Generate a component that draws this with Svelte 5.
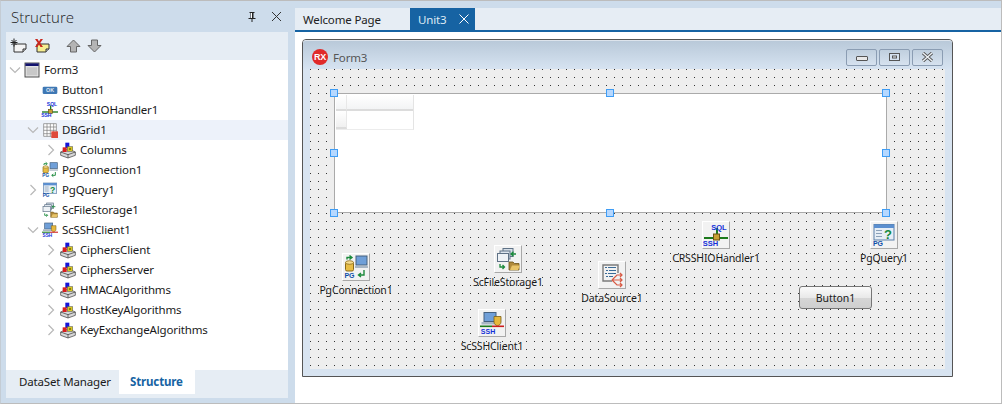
<script>
  const tree = [
    { name: 'Form3', icon: 'form', level: 0, arrow: 'down' },
    { name: 'Button1', icon: 'button', level: 1 },
    { name: 'CRSSHIOHandler1', icon: 'handler', level: 1 },
    { name: 'DBGrid1', icon: 'grid', level: 1, arrow: 'down', active: true },
    { name: 'Columns', icon: 'cube', level: 2, arrow: 'right' },
    { name: 'PgConnection1', icon: 'conn', level: 1 },
    { name: 'PgQuery1', icon: 'query', level: 1, arrow: 'right' },
    { name: 'ScFileStorage1', icon: 'files', level: 1 },
    { name: 'ScSSHClient1', icon: 'ssh', level: 1, arrow: 'down' },
    { name: 'CiphersClient', icon: 'cube', level: 2, arrow: 'right' },
    { name: 'CiphersServer', icon: 'cube', level: 2, arrow: 'right' },
    { name: 'HMACAlgorithms', icon: 'cube', level: 2, arrow: 'right' },
    { name: 'HostKeyAlgorithms', icon: 'cube', level: 2, arrow: 'right' },
    { name: 'KeyExchangeAlgorithms', icon: 'cube', level: 2, arrow: 'right' }
  ];

  // placed by hand on the form canvas, coordinates relative to the client area
  const components = [
    { name: 'PgConnection1', icon: 'conn', x: 32, y: 184 },
    { name: 'ScFileStorage1', icon: 'files', x: 184, y: 176 },
    { name: 'ScSSHClient1', icon: 'ssh', x: 168, y: 240 },
    { name: 'DataSource1', icon: 'source', x: 288, y: 192 },
    { name: 'CRSSHIOHandler1', icon: 'handler', x: 392, y: 152 },
    { name: 'PgQuery1', icon: 'query', x: 560, y: 152 }
  ];

  const handles = [
    [0, 0], [276, 0], [552, 0],
    [0, 60], [552, 60],
    [0, 120], [276, 120], [552, 120]
  ];
</script>

{#snippet icon(kind, size)}
  <svg class="icon" width={size} height={size} viewBox="0 0 24 24">
    {#if kind === 'form'}
      <rect x="1.5" y="1.5" width="21" height="21" fill="#e4e4e4" stroke="#444" stroke-width="1.4" />
      <rect x="2" y="2" width="20" height="4" fill="#14146e" />
      <rect x="4" y="8" width="16" height="12" fill="#c8c8c8" />
    {:else if kind === 'button'}
      <rect x="1" y="7" width="22" height="11" rx="2" fill="#3f78b4" />
      <text x="12" y="15.5" class="tiny" fill="#dfe9f5" font-size="8">OK</text>
    {:else if kind === 'handler'}
      <rect x="0" y="14" width="24" height="2" fill="#1c7a1c" />
      <rect x="12" y="5" width="2" height="10" fill="#1c7a1c" />
      <rect x="9.5" y="11" width="6" height="6" fill="#c8a035" stroke="#6b5316" stroke-width="1" />
      <text x="15" y="6.5" class="tiny" fill="#1430d8" font-size="7.5">SQL</text>
      <text x="6.5" y="22.5" class="tiny" fill="#1430d8" font-size="7.5">SSH</text>
    {:else if kind === 'grid'}
      <path d="M2.5 2.5h19v19h-19zM2.5 7.5h19M2.5 12.5h19M2.5 17.5h19M7.5 2.5v19M12.5 2.5v19M17.5 2.5v19" fill="#fff" stroke="#777" stroke-width="1" />
      <rect x="14" y="14" width="10" height="10" fill="#df4a3c" />
    {:else if kind === 'cube'}
      <path d="M1 15l11-5 11 5v5l-11 4-11-4z" fill="#d8d8d8" stroke="#333" stroke-width="1" />
      <path d="M1 15l11 4 11-4M12 19v5" fill="none" stroke="#333" stroke-width="1" />
      <rect x="8" y="1" width="6" height="8" fill="#1414d8" />
      <rect x="4" y="8" width="6" height="7" fill="#d82020" />
      <rect x="11" y="7" width="8" height="7" fill="#d8c820" stroke="#555" stroke-width=".8" />
      <circle cx="15" cy="10.5" r="1.6" fill="#7a6a10" />
    {:else if kind === 'conn'}
      <rect x="1.5" y="7" width="8" height="9" rx="1.5" fill="#e8bd45" stroke="#8a6a18" stroke-width="1" />
      <ellipse cx="5.5" cy="7.5" rx="4" ry="1.8" fill="#f6dd90" stroke="#8a6a18" stroke-width=".8" />
      <rect x="12" y="1" width="11" height="9" fill="#6f9fd8" stroke="#44607f" stroke-width="1" />
      <path d="M11 11h13v2H11z" fill="#a8b6c4" />
      <path d="M3 4.500V2.500h4M5.500 .500L8 2.500 5.500 4.500" fill="none" stroke="#1c8a3c" stroke-width="1.400" />
      <path d="M20 15v5h-5M17 18l-2.500 2 2.500 2" fill="none" stroke="#1c8a3c" stroke-width="1.400" />
      <text x="5.500" y="22.500" class="tiny" fill="#0f4fa8" font-size="7">PG</text>
    {:else if kind === 'query'}
      <rect x="2" y="1.500" width="20" height="15.500" fill="#e6eef6" stroke="#5a7fa8" stroke-width="1" />
      <rect x="2" y="1.500" width="20" height="3.500" fill="#5b8fd0" />
      <path d="M4 7.500h6M4 10.500h6M4 13.500h6" stroke="#8aa0b8" stroke-width="1.200" />
      <text x="16" y="16" class="tiny" fill="#138a3c" font-size="13">?</text>
      <text x="6" y="22.500" class="tiny" fill="#0f4fa8" font-size="7">PG</text>
    {:else if kind === 'files'}
      <rect x="7" y="1.500" width="10" height="8" fill="#d6dfe8" stroke="#5f7286" stroke-width="1" />
      <rect x="4" y="4" width="10" height="8" fill="#dde5ee" stroke="#5f7286" stroke-width="1" />
      <rect x="1.500" y="6.500" width="11" height="8" fill="#eef2f6" stroke="#5f7286" stroke-width="1" />
      <path d="M15 7h5M17.500 4.800L15 7l2.500 2.200M4 17v3h4M6.500 18l2 2-2 2" fill="none" stroke="#1c8a3c" stroke-width="1.300" />
      <path d="M13 15h4l1.500 1.500H23V23H13z" fill="#b08a3c" stroke="#6b5316" stroke-width=".8" />
      <path d="M14 23l2-4.500h8L22 23z" fill="#e8c468" />
    {:else if kind === 'ssh'}
      <rect x="4" y="1.500" width="12" height="9" fill="#6f9fd8" stroke="#44607f" stroke-width="1" />
      <path d="M1.500 11h16v2.500h-16z" fill="#a8b6c4" />
      <path d="M14 5.500h7v5.500c0 2.500-2 3-3.500 4-1.500-1-3.500-1.500-3.500-4z" fill="#e6b83c" stroke="#7a5e16" stroke-width=".8" />
      <rect x="0" y="14.500" width="12" height="1.600" fill="#1c7a1c" />
      <rect x="12" y="14.500" width="12" height="1.600" fill="#cc1c1c" />
      <text x="8" y="22.500" class="tiny" fill="#1430d8" font-size="7">SSH</text>
    {:else if kind === 'source'}
      <path d="M18 10V2H3v16h9" fill="none" stroke="#7c7c7c" stroke-width="1.400" />
      <path d="M5 4.500h2M8 4.500h8M6 7.500h2M9 7.500h7M5 10.500h2M8 10.500h8M6 13.500h2M9 13.500h4" stroke="#3c6c98" stroke-width="1.200" />
      <path d="M12 17l5-5h5M12 17h10M12 17l5 5h5M20 10l2 2-2 2M20 15l2 2-2 2M20 20l2 2-2 2" fill="none" stroke="#d85a44" stroke-width="1.200" />
    {/if}
  </svg>
{/snippet}

{#snippet chevron(dir)}
  <svg class="chev" width="12" height="12" viewBox="0 0 12 12">
    {#if dir === 'down'}
      <path d="M1 3.500l5 5 5-5" />
    {:else if dir === 'right'}
      <path d="M3.500 1l5 5-5 5" />
    {/if}
  </svg>
{/snippet}

<div class="app">
  <aside class="left">
    <header class="panel-title">
      <span>Structure</span>
      <div class="panel-actions">
        <svg width="10" height="12" viewBox="0 0 10 12"><path d="M2.500 1h5v1h-1v5h2v1h-3v3h-1V8h-3V7h2V2h-1z" fill="#222" /><path d="M4 2h1v5H4z" fill="#fff" /></svg>
        <svg width="11" height="11" viewBox="0 0 11 11"><path d="M1 1l9 9M10 1l-9 9" stroke="#333" stroke-width="1" fill="none" /></svg>
      </div>
    </header>

    <div class="panel-body">
      <div class="toolbar">
        <svg width="17" height="16" viewBox="0 0 17 16">
          <path d="M4 6h12v5l-3 3H4z" fill="#f4f4f4" stroke="#333" />
          <path d="M13 14v-3h3" fill="#ccc" stroke="#333" />
          <path d="M4 .5v8M.5 4.500h7M1.500 2l5 5M6.500 2l-5 5" stroke="#222" />
        </svg>
        <svg width="17" height="16" viewBox="0 0 17 16">
          <path d="M4 6h12v5l-3 3H4z" fill="#f6ee90" stroke="#333" />
          <path d="M13 14v-3h3" fill="#ccc" stroke="#333" />
          <path d="M2 1h2.500L6 3.500 7.500 1H10L7.200 5 10 9H7.500L6 6.500 4.500 9H2l2.800-4z" fill="#c8261c" />
        </svg>
        <svg class="gap" width="15" height="14" viewBox="0 0 15 14"><path d="M7.500 1L14 7.500h-3.500V13h-6V7.500H1z" fill="#b4b4b4" stroke="#666" /></svg>
        <svg width="15" height="14" viewBox="0 0 15 14"><path d="M7.500 13L14 6.500h-3.500V1h-6v5.500H1z" fill="#b4b4b4" stroke="#666" /></svg>
      </div>

      <ul class="tree">
        {#each tree as row}
          <li class="row level-{row.level}" class:active={row.active}>
            <span class="arrow">{@render chevron(row.arrow)}</span>
            {@render icon(row.icon, 16)}
            <span class="label">{row.name}</span>
          </li>
        {/each}
      </ul>

      <div class="bottom-tabs">
        <span class="bottom-tab">DataSet Manager</span>
        <span class="bottom-tab current">Structure</span>
      </div>
    </div>
  </aside>

  <main class="right">
    <nav class="tabs">
      <span class="tab">Welcome Page</span>
      <span class="tab current">
        Unit3
        <svg width="10" height="10" viewBox="0 0 10 10"><path d="M.5.500l9 9M9.500.500l-9 9" stroke="#fff" stroke-width="1" fill="none" /></svg>
      </span>
    </nav>

    <div class="designer">
      <div class="form">
        <div class="form-title">
          <span class="rx">RX</span>
          <span class="form-name">Form3</span>
          <div class="window-buttons">
            <span class="wbtn"><i class="min"></i></span>
            <span class="wbtn"><svg width="11" height="8" viewBox="0 0 11 8"><rect x=".5" y=".5" width="10" height="7" fill="#d6e2ef" stroke="#555" /><rect x="3.500" y="3" width="4" height="2" fill="#eef2f6" stroke="#555" /></svg></span>
            <span class="wbtn"><svg width="13" height="10" viewBox="0 0 13 10"><path d="M2 1l9 8M11 1l-9 8" stroke="#555" stroke-width="3.200" fill="none" /><path d="M2 1l9 8M11 1l-9 8" stroke="#eef2f6" stroke-width="1.400" fill="none" /></svg></span>
          </div>
        </div>

        <div class="client">
          <div class="dbgrid">
            <div class="fake-grid">
              <div class="cell head ind"></div>
              <div class="cell head"></div>
              <div class="cell ind second"></div>
              <div class="cell"></div>
            </div>
            {#each handles as h}
              <span class="handle" style="left: {h[0]}px; top: {h[1]}px"></span>
            {/each}
          </div>

          {#each components as c}
            <div class="comp" style="left: {c.x}px; top: {c.y}px">
              <div class="comp-box">{@render icon(c.icon, 24)}</div>
              <div class="comp-label">{c.name}</div>
            </div>
          {/each}

          <button class="btn1" type="button">Button1</button>
        </div>
      </div>
    </div>
  </main>
</div>

<style>
  :global(body) {
    margin: 0;
  }

  .app {
    width: 1002px;
    height: 404px;
    box-sizing: border-box;
    display: grid;
    grid-template-columns: 294px 1fr;
    border: 1px solid #bcbcbc;
    border-left-color: #c4ccd4;
    background: #cddceb;
    font-family: "Noto Sans", "Open Sans", sans-serif;
    font-size: 11.5px;
    letter-spacing: -0.15px;
    color: #1a1a1a;
    overflow: hidden;
  }

  .left {
    display: flex;
    flex-direction: column;
    padding: 0 7px 5px 5px;
    min-height: 0;
  }

  .panel-title {
    height: 31px;
    flex: none;
    display: flex;
    align-items: center;
    justify-content: space-between;
    padding-left: 5px;
    font-family: "Open Sans", sans-serif;
    font-weight: 300;
    font-size: 15px;
    letter-spacing: 0;
    color: #222;
  }

  .panel-actions {
    display: flex;
    align-items: center;
    gap: 14px;
    padding-right: 6px;
  }

  .panel-body {
    flex: 1;
    display: flex;
    flex-direction: column;
    min-height: 0;
    background: #fff;
  }

  .toolbar {
    height: 28px;
    flex: none;
    box-sizing: border-box;
    display: flex;
    align-items: center;
    gap: 6px;
    padding-left: 4px;
    background: #e6edf4;
  }

  .toolbar .gap {
    margin-left: 10px;
  }

  .tree {
    flex: 1;
    list-style: none;
    margin: 0;
    padding: 0;
  }

  .row {
    height: 20px;
    display: flex;
    align-items: center;
  }

  .row.active {
    background: #edf2fa;
  }

  .level-0 {
    padding-left: 3px;
  }

  .level-1 {
    padding-left: 21px;
  }

  .level-2 {
    padding-left: 39px;
  }

  .arrow {
    width: 15px;
    height: 12px;
    flex: none;
    display: flex;
  }

  .chev {
    display: block;
  }

  .chev path {
    fill: none;
    stroke: #b8b8b8;
    stroke-width: 1.200;
  }

  .icon {
    flex: none;
    display: block;
    overflow: visible;
  }

  .tiny {
    font-family: "Liberation Sans", sans-serif;
    font-weight: 700;
    text-anchor: middle;
    letter-spacing: 0;
  }

  .label {
    margin: 0 0 2px 4px;
    white-space: nowrap;
  }

  .bottom-tabs {
    height: 28px;
    flex: none;
    display: flex;
    align-items: flex-start;
    background: #e6edf4;
  }

  .bottom-tab {
    width: 113px;
    box-sizing: border-box;
    height: 24px;
    display: flex;
    align-items: center;
    padding: 0 0 2px 13px;
  }

  .bottom-tab.current {
    width: 76px;
    padding-left: 11px;
    background: #fff;
    color: #1663a3;
    font-weight: 700;
  }

  .right {
    display: flex;
    flex-direction: column;
    min-width: 0;
  }

  .tabs {
    height: 22px;
    margin-top: 7px;
    flex: none;
    display: flex;
    background: #e6edf4;
    border-bottom: 2px solid #1663a3;
  }

  .tab {
    display: flex;
    align-items: center;
    gap: 13px;
    box-sizing: border-box;
    padding-left: 8px;
    width: 115px;
    color: #222;
  }

  .tab.current {
    width: 65px;
    background: #1663a3;
    color: #dfeaf5;
  }

  .tab svg {
    flex: none;
  }

  .designer {
    flex: 1;
    background: #fff;
    padding: 7px 0 0 7px;
    min-height: 0;
  }

  .form {
    width: 651px;
    height: 338px;
    box-sizing: border-box;
    border: 1px solid #555;
    border-radius: 4px 4px 0 0;
    padding: 0 7px 8px 7px;
    background: #d8e4f1;
  }

  .form-title {
    height: 29px;
    margin: 0 -7px;
    padding: 4px 9px 0 9px;
    display: flex;
    align-items: center;
    background: linear-gradient(#b9c9d9, #d6e3f1);
    border-top: 1px solid #dde4ec;
    box-sizing: border-box;
    border-radius: 3px 3px 0 0;
  }

  .rx {
    width: 16px;
    height: 16px;
    border-radius: 50%;
    background: #e02a2a;
    color: #fff;
    font-family: "Liberation Sans", sans-serif;
    font-size: 9px;
    font-weight: 700;
    line-height: 16px;
    text-align: center;
  }

  .form-name {
    margin-left: 5px;
    color: #555;
  }

  .window-buttons {
    margin-left: auto;
    display: flex;
    gap: 2px;
  }

  .wbtn {
    width: 29px;
    height: 15px;
    border: 1px solid #8b9db3;
    border-radius: 2px;
    display: flex;
    align-items: center;
    justify-content: center;
    background: linear-gradient(#c0cfde, #d6e2ef);
  }

  .min {
    width: 10px;
    height: 3px;
    margin-top: 3px;
    background: #e8e8e8;
    border: 1px solid #555;
    border-radius: 1px;
  }

  .client {
    position: relative;
    height: 300px;
    background:
      linear-gradient(to bottom, transparent 1px, #eeeeee 1px) 0 0 / 8px 8px,
      linear-gradient(to right, #333333 1px, #eeeeee 1px) 0 0 / 8px 8px;
  }

  .dbgrid {
    position: absolute;
    left: 24px;
    top: 24px;
    width: 551px;
    height: 118px;
    border: 1px solid #aaa;
    background: #fff;
  }

  .fake-grid {
    margin: 1px;
    width: 77px;
    display: grid;
    grid-template-columns: 11px 1fr;
    grid-template-rows: 16px 18px;
    border-right: 1px solid #e4e4e4;
    border-bottom: 1px solid #ececec;
  }

  .cell {
    border-right: 1px solid #e8e8e8;
  }

  .cell:nth-child(even) {
    border-right: 0;
  }

  .cell.head {
    background: linear-gradient(#fff, #f3f4f5);
    border-bottom: 2px solid #dcdcdc;
  }

  .cell.ind.second {
    background: linear-gradient(#fff, #f0f0f0);
    border-bottom: 2px solid #dcdcdc;
    height: 16px;
  }

  .handle {
    position: absolute;
    width: 6px;
    height: 6px;
    margin: -5px 0 0 -5px;
    background: #b6d8ff;
    border: 1px solid #3f9df5;
  }

  .comp {
    position: absolute;
    width: 120px;
    margin-left: -46px;
    display: flex;
    flex-direction: column;
    align-items: center;
    font-size: 10.5px;
  }

  .comp-box {
    width: 28px;
    height: 28px;
    box-sizing: border-box;
    padding: 1px;
    background: #f2f2f2;
    border: 1px solid;
    border-color: #fff #a8a8a8 #a8a8a8 #fff;
  }

  .comp-label {
    margin-top: 2px;
    white-space: nowrap;
  }

  .btn1 {
    position: absolute;
    left: 489px;
    top: 217px;
    width: 73px;
    height: 23px;
    padding: 0;
    border: 1px solid #757575;
    border-radius: 3px;
    background: linear-gradient(#fafafa 0, #e9e9e9 50%, #d6d6d6 51%, #cfcfcf 100%);
    font: inherit;
    font-size: 10.5px;
    color: #1a1a1a;
  }
</style>
